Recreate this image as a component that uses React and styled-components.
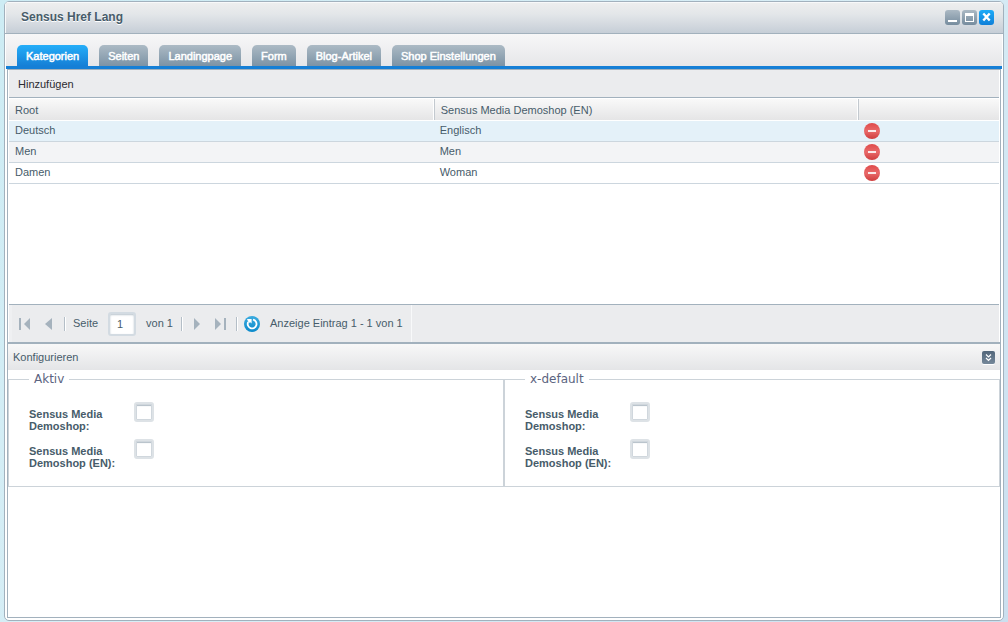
import { useState } from 'react'
import styled, { createGlobalStyle } from 'styled-components'

const GlobalStyle = createGlobalStyle`
    * {
        box-sizing: border-box;
    }
    body {
        margin: 0;
        background: linear-gradient(135deg, #cdecf4 0%, #d8eef6 50%, #cbdfef 100%);
        font-family: "Liberation Sans", Arial, sans-serif;
        font-size: 11px;
        line-height: 13px;
        color: #475c6a;
    }
    button, input {
        font: inherit;
        color: inherit;
        margin: 0;
        padding: 0;
    }
    button {
        border: 0;
        background: none;
        cursor: pointer;
    }
    svg {
        display: block;
    }
`

const Page = styled.div`
    display: flex;
    min-height: 100vh;
    padding: 1px 4px;
`

const Window = styled.section`
    flex: 1;
    display: flex;
    flex-direction: column;
    border: 1px solid #a2b1bd;
    border-radius: 5px;
    background: #fff;
    overflow: hidden;
`

const TitleBar = styled.header`
    display: flex;
    align-items: center;
    justify-content: space-between;
    height: 32px;
    padding: 0 9px 0 16px;
    border-bottom: 1px solid #a2b1bd;
    box-shadow: inset 1px 1px 0 #f8f9fa;
    background: linear-gradient(#eeefef, #e3e6e9 40%, #c6ced7);
`

const Title = styled.h1`
    margin: 0;
    padding-bottom: 2px;
    font-size: 12px;
    line-height: 14px;
    text-shadow: 0 1px 0 #fff;
`

const WindowTools = styled.div`
    display: flex;
    gap: 2px;
`

const ToolButton = styled.button`
    width: 15px;
    height: 15px;
    border-radius: 3px;
    background: ${props => props.$primary ? 'linear-gradient(#1cabf8, #0f7fd8)' : 'linear-gradient(#abb9c4, #768c9e)'};
`

const TabBar = styled.nav`
    display: flex;
    align-items: flex-end;
    gap: 11px;
    height: 35px;
    margin: 0 1px;
    padding: 0 11px;
    border-bottom: 3px solid #157fd6;
    background: linear-gradient(#f7f7f8, #e6e7e9);
`

const Tab = styled.button`
    height: 21px;
    padding: 2px 9px 0;
    border-radius: 5px 5px 0 0;
    color: #fff;
    white-space: nowrap;
    -webkit-text-stroke: 0.5px #fff;
    background: ${props => props.$active ? 'linear-gradient(#25aef9, #157fd6)' : 'linear-gradient(#acbac5, #7c93a5)'};
`

const Content = styled.main`
    flex: 1;
    display: flex;
    flex-direction: column;
    margin: 0 2px 2px;
    border: 1px solid #a2b1bd;
`

const GridPanel = styled.section`
    flex: 1 0 0;
    display: flex;
    flex-direction: column;
    padding: 0 1px;
`

const Toolbar = styled.div`
    display: flex;
    align-items: center;
    height: 28px;
    padding: 2px 9px 0;
    border-bottom: 1px solid #a2b1bd;
    background: #ebecee;
`

const AddButton = styled.button`
    color: #2b2b30;
`

const TableArea = styled.div`
    flex: 1;
`

const Table = styled.table`
    width: 100%;
    table-layout: fixed;
    border-collapse: separate;
    border-spacing: 0;
`

const HeadCell = styled.th`
    width: ${props => props.$width};
    height: 23px;
    padding: 2px 6px 0;
    border: solid #fff;
    border-width: 1px 0;
    box-shadow: ${props => props.$last ? 'none' : 'inset -1px 0 0 #c3c9cf, inset -2px 0 0 #fff'};
    background: linear-gradient(#f9f9f9, #e5e5e6);
    font-weight: normal;
    text-align: left;
`

const Row = styled.tr`
    background: ${props => props.$background};
`

const Cell = styled.td`
    height: 21px;
    padding: 0 5px 2px;
    border-bottom: 1px solid #ccd6de;

    &:first-child {
        padding-left: 6px;
    }
    &:last-child {
        padding: 2px 5px;
    }
`

const DeleteButton = styled.button`
    display: block;
    width: 16px;
    height: 16px;
`

const Paging = styled.footer`
    display: flex;
    align-items: center;
    height: 38px;
    padding: 0 4px;
    border-top: 1px solid #a2b1bd;
    box-shadow: inset 3px 0 0 #eff0f2;
    background: #ebecee;
`

const PageButton = styled.button`
    display: flex;
    align-items: center;
    justify-content: center;
    width: 24px;
    height: 24px;
`

const Separator = styled.span`
    width: 2px;
    height: 14px;
    margin: 0 2px 0 3px;
    border-left: 1px solid #b4bec7;
    border-right: 1px solid #fff;
`

const PageLabel = styled.label`
    display: flex;
    align-items: center;
    gap: 10px;
    padding: 0 5px;
`

const PageInput = styled.input`
    width: 28px;
    height: 24px;
    padding-left: 7px;
    border: 2px solid #d3dbe2;
    border-radius: 3px;
    background: #fff;
    box-shadow: inset 0 1px 2px #b9c4cd;
    outline: none;
`

const Status = styled.span`
    padding: 12px 8px 12px 6px;
    border-right: 1px solid #f8f9fa;
`

const ConfigPanel = styled.section`
    flex: 1 0 3px;
    border-top: 2px solid #a2b1bd;
`

const ConfigHeader = styled.div`
    display: flex;
    align-items: center;
    justify-content: space-between;
    height: 26px;
    padding: 0 5px;
    background: linear-gradient(#f8f8f8, #e4e5e7);
`

const ConfigTitle = styled.h2`
    margin: 0;
    font-size: 11px;
    font-weight: normal;
`

const CollapseButton = styled.button`
    width: 13px;
    height: 13px;
    border-radius: 2px;
    background: linear-gradient(#52667a, #75889a);
    box-shadow: 0 1px 0 #fff;
`

const FieldSets = styled.div`
    display: grid;
    grid-template-columns: 1fr 1fr;
    padding-top: 1px;
`

const FieldSet = styled.fieldset`
    display: flex;
    flex-direction: column;
    gap: 7px;
    min-width: 0;
    margin: 0;
    padding: 15px 20px 17px;
    border: 1px solid #ccd3d9;
`

const Legend = styled.legend`
    padding: 0 5px;
    font-family: "DejaVu Sans", Verdana, sans-serif;
    font-size: 12px;
    line-height: 16px;
    color: #5b6480;
`

const Field = styled.label`
    display: flex;
    align-items: flex-start;
    font-weight: bold;
    line-height: 12px;
`

const FieldText = styled.span`
    width: 105px;
    padding: 6px 5px 0 0;
`

const CheckBox = styled.input`
    appearance: none;
    width: 20px;
    height: 20px;
    border: 2px solid #dde2e6;
    border-radius: 3px;
    background: #fff;
    box-shadow: inset 0 0 0 1px #d0d7dd, inset 0 2px 1px #b3bec7;

    &:checked {
        background: #157fd6;
    }
`

const tabs = ['Kategorien', 'Seiten', 'Landingpage', 'Form', 'Blog-Artikel', 'Shop Einstellungen']

const rows = [
    { root: 'Deutsch', target: 'Englisch', background: '#e4f1f9' },
    { root: 'Men', target: 'Men', background: '#f3f4f6' },
    { root: 'Damen', target: 'Woman', background: '#fff' },
]

const DeleteIcon = () => (
    <svg width="16" height="16" viewBox="0 0 16 16">
        <defs>
            <linearGradient id="deleteFill" x1="0" y1="0" x2="0" y2="1">
                <stop offset="0" stopColor="#df4a4a" />
                <stop offset="0.5" stopColor="#e96a6a" />
                <stop offset="1" stopColor="#cf3c3c" />
            </linearGradient>
        </defs>
        <circle cx="8" cy="8" r="8" fill="url(#deleteFill)" />
        <rect x="4" y="7" width="8" height="2" fill="#fbe9e9" />
    </svg>
)

const RefreshIcon = () => (
    <svg width="16" height="16" viewBox="0 0 16 16">
        <defs>
            <linearGradient id="refreshFill" x1="0" y1="0" x2="0" y2="1">
                <stop offset="0" stopColor="#3cabdf" />
                <stop offset="1" stopColor="#0b8acb" />
            </linearGradient>
        </defs>
        <circle cx="8" cy="8" r="8" fill="url(#refreshFill)" />
        <path d="M9 3.7A4.4 4.4 0 1 1 4.2 6" fill="none" stroke="#fff" strokeWidth="1.8" />
        <path d="M3 3H7.6V7.6L6.2 6.2L4.8 7Z" fill="#fff" />
    </svg>
)

// bar: -1 draws the stop bar on the left, 1 on the right, 0 leaves it out
const ArrowIcon = ({ direction, bar = 0 }) => (
    <svg width="12" height="12" viewBox="0 0 12 12">
        {direction === 'left' && <path d={bar ? 'M11 0V12L5 6Z' : 'M9 0V12L2 6Z'} fill="#a5b2bd" />}
        {direction === 'right' && <path d={bar ? 'M0 0V12L6 6Z' : 'M3 0V12L9 6Z'} fill="#a5b2bd" />}
        {bar === -1 && <rect x="0" y="0" width="2" height="12" fill="#a5b2bd" />}
        {bar === 1 && <rect x="9" y="0" width="2" height="12" fill="#a5b2bd" />}
    </svg>
)

const ConfigFieldSet = ({ title }) => (
    <FieldSet>
        <Legend>{title}</Legend>
        <Field>
            <FieldText>Sensus Media Demoshop:</FieldText>
            <CheckBox type="checkbox" />
        </Field>
        <Field>
            <FieldText>Sensus Media Demoshop (EN):</FieldText>
            <CheckBox type="checkbox" />
        </Field>
    </FieldSet>
)

const App = () => {

    const [activeTab, setActiveTab] = useState('Kategorien')
    const [page, setPage] = useState('1')

    return (
        <Page>
            <GlobalStyle />
            <Window>
                <TitleBar>
                    <Title>Sensus Href Lang</Title>
                    <WindowTools>
                        <ToolButton aria-label="Minimieren">
                            <svg width="15" height="15" viewBox="0 0 15 15">
                                <rect x="3" y="10" width="9" height="2" fill="#fff" />
                            </svg>
                        </ToolButton>
                        <ToolButton aria-label="Maximieren">
                            <svg width="15" height="15" viewBox="0 0 15 15">
                                <path d="M3 3H12V12H3ZM4 6V11H11V6Z" fill="#fff" fillRule="evenodd" />
                            </svg>
                        </ToolButton>
                        <ToolButton $primary aria-label="Schließen">
                            <svg width="15" height="15" viewBox="0 0 15 15">
                                <path d="M4.3 3.5L10.7 10.5M10.7 3.5L4.3 10.5" stroke="#fff" strokeWidth="2.4" />
                            </svg>
                        </ToolButton>
                    </WindowTools>
                </TitleBar>

                <TabBar>
                    {tabs.map((tab) => (
                        <Tab key={tab} $active={tab === activeTab} onClick={() => setActiveTab(tab)}>{tab}</Tab>
                    ))}
                </TabBar>

                <Content>
                    <GridPanel>
                        <Toolbar>
                            <AddButton>Hinzufügen</AddButton>
                        </Toolbar>
                        <TableArea>
                            <Table>
                                <thead>
                                    <tr>
                                        <HeadCell $width="43%">Root</HeadCell>
                                        <HeadCell $width="42.9%">Sensus Media Demoshop (EN)</HeadCell>
                                        <HeadCell $last />
                                    </tr>
                                </thead>
                                <tbody>
                                    {rows.map((row) => (
                                        <Row key={row.root} $background={row.background}>
                                            <Cell>{row.root}</Cell>
                                            <Cell>{row.target}</Cell>
                                            <Cell>
                                                <DeleteButton aria-label={`${row.root} löschen`}><DeleteIcon /></DeleteButton>
                                            </Cell>
                                        </Row>
                                    ))}
                                </tbody>
                            </Table>
                        </TableArea>
                        <Paging>
                            <PageButton aria-label="Erste Seite"><ArrowIcon direction="left" bar={-1} /></PageButton>
                            <PageButton aria-label="Vorherige Seite"><ArrowIcon direction="left" /></PageButton>
                            <Separator />
                            <PageLabel>
                                Seite
                                <PageInput value={page} onChange={(event) => setPage(event.target.value)} />
                                von 1
                            </PageLabel>
                            <Separator />
                            <PageButton aria-label="Nächste Seite"><ArrowIcon direction="right" /></PageButton>
                            <PageButton aria-label="Letzte Seite"><ArrowIcon direction="right" bar={1} /></PageButton>
                            <Separator />
                            <PageButton aria-label="Aktualisieren"><RefreshIcon /></PageButton>
                            <Status>Anzeige Eintrag 1 - 1 von 1</Status>
                        </Paging>
                    </GridPanel>

                    <ConfigPanel>
                        <ConfigHeader>
                            <ConfigTitle>Konfigurieren</ConfigTitle>
                            <CollapseButton aria-label="Einklappen">
                                <svg width="13" height="13" viewBox="0 0 13 13">
                                    <path d="M4 3.5L6.5 6L9 3.5M4 7L6.5 9.5L9 7" fill="none" stroke="#fff" strokeWidth="1.2" />
                                </svg>
                            </CollapseButton>
                        </ConfigHeader>
                        <FieldSets>
                            <ConfigFieldSet title="Aktiv" />
                            <ConfigFieldSet title="x-default" />
                        </FieldSets>
                    </ConfigPanel>
                </Content>
            </Window>
        </Page>
    )
}

export default App
